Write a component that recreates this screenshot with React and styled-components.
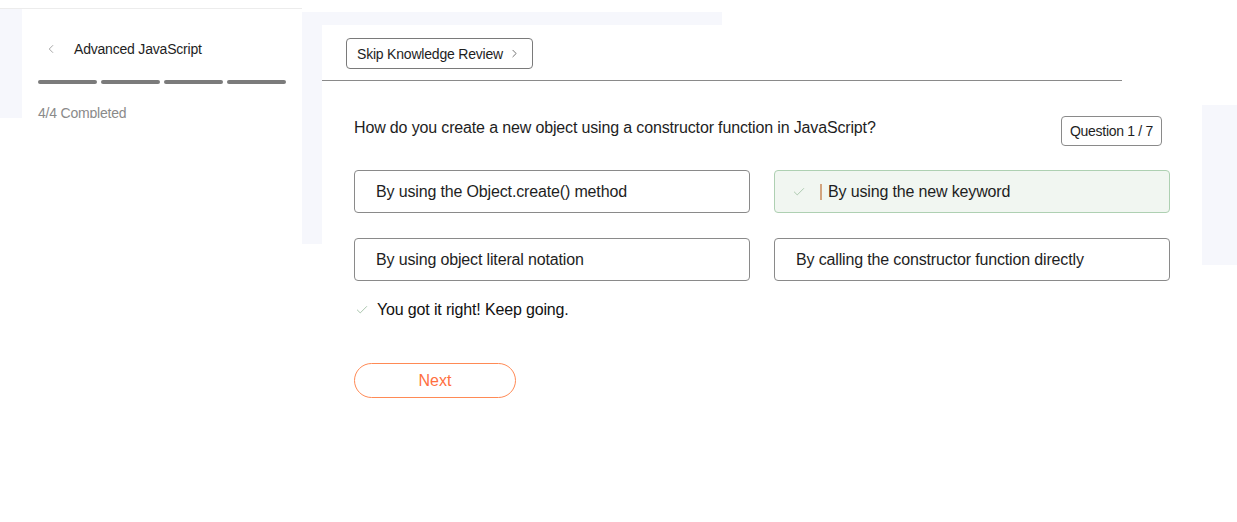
import React from "react"
import styled, { createGlobalStyle } from "styled-components"
import { ChevronLeft, ChevronRight, Check } from "lucide-react"

const GlobalStyle = createGlobalStyle`
	body {
		margin: 0;
		background: #ffffff;
		font-family: "Liberation Sans", Arial, sans-serif;
		color: #222;
	}
`

const options = [
	{ text: "By using the Object.create() method" },
	{ text: "By using the new keyword", correct: true },
	{ text: "By using object literal notation" },
	{ text: "By calling the constructor function directly" },
]

export default function App() {
	return (
		<>
			<GlobalStyle />
			<Page>
				<SideColumn>
					<SidePanel>
						<TitleRow>
							<ChevronLeft size={14} strokeWidth={1.5} color="#9a9a9a" />
							<Title>Advanced JavaScript</Title>
						</TitleRow>
						<Progress>
							{[0, 1, 2, 3].map((i) => (
								<Segment key={i} />
							))}
						</Progress>
						<Completed>4/4 Completed</Completed>
					</SidePanel>
				</SideColumn>
				<MainColumn>
					<Card>
						<Header>
							<SkipButton>
								Skip Knowledge Review
								<ChevronRight size={13} strokeWidth={1.5} color="#555" />
							</SkipButton>
						</Header>
						<Content>
							<QuestionRow>
								<Question>
									How do you create a new object using a constructor function in JavaScript?
								</Question>
								<Badge>Question 1 / 7</Badge>
							</QuestionRow>
							<Options>
								{options.map((o) => (
									<Option key={o.text} $correct={o.correct}>
										{o.correct && (
											<>
												<Check size={14} strokeWidth={1.5} color="#a3c4a6" />
												<Caret />
											</>
										)}
										{o.text}
									</Option>
								))}
							</Options>
							<Feedback>
								<Check size={14} strokeWidth={1.5} color="#9dbda1" />
								You got it right! Keep going.
							</Feedback>
							<NextButton>Next</NextButton>
						</Content>
					</Card>
				</MainColumn>
			</Page>
		</>
	)
}

const Page = styled.div`
	display: flex;
	align-items: flex-start;
	padding-top: 8px;
`
const SideColumn = styled.div`
	width: 302px;
	flex-shrink: 0;
	height: 109px;
	background: linear-gradient(#f6f7fc, #f6f7fc) no-repeat;
	background-size: 22px 100%;
	border-top: 1px solid #ececec;
`
const SidePanel = styled.div`
	margin-left: 22px;
	height: 109px;
	background: #fff;
	padding: 0 16px;
	overflow: hidden;
`
const TitleRow = styled.div`
	display: flex;
	align-items: center;
	gap: 16px;
	margin-top: 30px;
	padding-left: 6px;
	height: 20px;
`
const Title = styled.span`
	font-size: 14px;
	letter-spacing: -0.2px;
	color: #1e1e1e;
`
const Progress = styled.div`
	display: grid;
	grid-template-columns: repeat(4, 1fr);
	gap: 4px;
	margin-top: 21px;
`
const Segment = styled.div`
	height: 4px;
	border-radius: 2px;
	background: #7b7b7b;
`
const Completed = styled.div`
	margin-top: 19px;
	font-size: 14px;
	line-height: 20px;
	letter-spacing: -0.2px;
	color: #8a8a8a;
`
const MainColumn = styled.div`
	flex: 1;
	padding-top: 4px;
	background:
		linear-gradient(#f6f7fc, #f6f7fc) 0 4px / 20px 232px no-repeat,
		linear-gradient(#f6f7fc, #f6f7fc) 0 4px / 420px 13px no-repeat,
		linear-gradient(#f6f7fc, #f6f7fc) right 0 top 97px / 35px 160px no-repeat;
`
const Card = styled.div`
	margin: 13px 35px 0 20px;
	background: #fff;
	min-height: 480px;
`
const Header = styled.div`
	width: 800px;
	padding: 13px 0 11px 24px;
	box-sizing: border-box;
	border-bottom: 1px solid #8a8a8a;
`
const SkipButton = styled.button`
	display: inline-flex;
	align-items: center;
	gap: 5px;
	height: 31px;
	padding: 0 11px 0 10px;
	border: 1px solid #7a7a7a;
	border-radius: 4px;
	background: #fff;
	font-family: inherit;
	font-size: 14px;
	letter-spacing: -0.2px;
	color: #1e1e1e;
`
const Content = styled.div`
	padding: 35px 32px 0 32px;
`
const QuestionRow = styled.div`
	display: flex;
	justify-content: space-between;
	align-items: flex-start;
`
const Question = styled.div`
	font-size: 16px;
	line-height: 20px;
	letter-spacing: -0.15px;
	margin-top: 2px;
	color: #1e1e1e;
`
const Badge = styled.div`
	margin-right: 8px;
	height: 30px;
	padding: 0 8px;
	display: flex;
	align-items: center;
	box-sizing: border-box;
	border: 1px solid #8a8a8a;
	border-radius: 4px;
	font-size: 14px;
	letter-spacing: -0.3px;
	color: #1e1e1e;
`
const Options = styled.div`
	display: grid;
	grid-template-columns: 1fr 1fr;
	column-gap: 24px;
	row-gap: 25px;
	margin-top: 24px;
`
const Option = styled.div`
	display: flex;
	align-items: center;
	height: 43px;
	box-sizing: border-box;
	padding-left: ${(p) => (p.$correct ? "17px" : "21px")};
	border: 1px solid ${(p) => (p.$correct ? "#aed0b2" : "#8a8a8a")};
	border-radius: 4px;
	background: ${(p) => (p.$correct ? "#f1f6f1" : "#fff")};
	font-size: 16px;
	letter-spacing: -0.15px;
	color: #1e1e1e;
`
const Caret = styled.span`
	width: 2px;
	height: 16px;
	background: #d2a47f;
	margin: 0 6px 0 14px;
`
const Feedback = styled.div`
	display: flex;
	align-items: center;
	gap: 8px;
	margin-top: 19px;
	padding-left: 1px;
	font-size: 16px;
	line-height: 20px;
	letter-spacing: -0.15px;
	color: #111;
`
const NextButton = styled.button`
	display: block;
	margin-top: 43px;
	width: 162px;
	height: 35px;
	border: 1px solid #ff8a55;
	border-radius: 18px;
	background: #fff;
	font-family: inherit;
	font-size: 16px;
	color: #ff6f3f;
`
